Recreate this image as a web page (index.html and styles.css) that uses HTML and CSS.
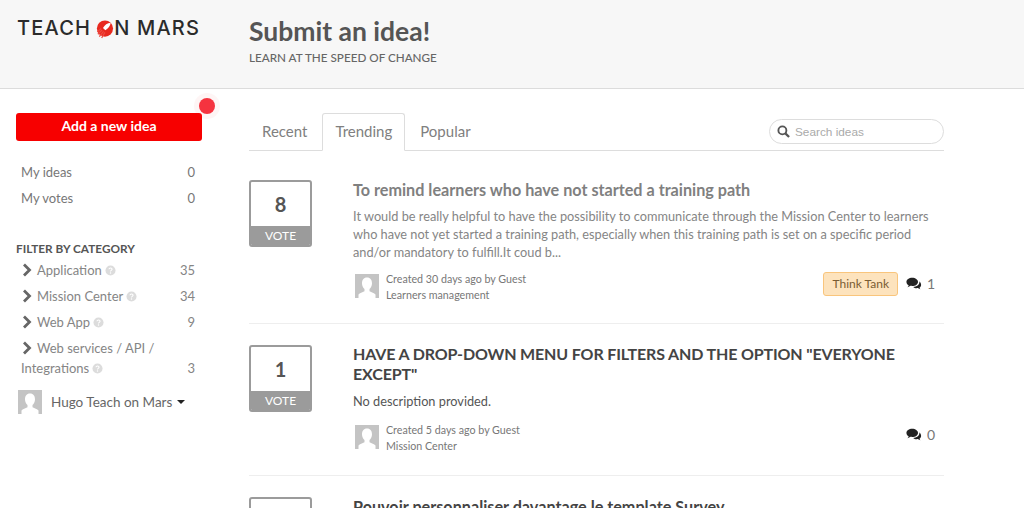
FILE: index.html
```html
<!DOCTYPE html>
<html lang="en">
<head>
    <meta charset="UTF-8">
    <title>Submit an idea!</title>
    <link rel="stylesheet" href="styles.css">
</head>
<body>
    <svg class="defs" width="0" height="0">
        <symbol id="avatar" viewBox="0 0 24 24">
            <rect width="24" height="24" fill="#c4c4c4"/>
            <path d="M12 3.500c-3.400 0-5 2.600-5 5.800 0 2.400 1 4.500 2.500 5.700v2.200c-2 1-4.800 1.700-6 3.300v3.500h17v-3.500c-1.200-1.600-4-2.300-6-3.300V15c1.500-1.200 2.500-3.300 2.500-5.700 0-3.200-1.600-5.800-5-5.800z" fill="#fff"/>
        </symbol>
        <symbol id="chevron" viewBox="0 0 10 14">
            <path d="M2 1.500 7.500 7 2 12.500" fill="none" stroke="#666" stroke-width="2.800"/>
        </symbol>
        <symbol id="comments" viewBox="0 0 18 14">
            <path d="M7 .5C3.400.5.500 2.600.500 5.200c0 1.500 1 2.900 2.500 3.800-.2.800-.7 1.500-1.300 2.100 1.300-.2 2.500-.7 3.400-1.500.6.100 1.200.2 1.900.2 3.600 0 6.500-2.100 6.500-4.600S10.600.5 7 .5z" fill="#222"/>
            <path d="M15 4.600c.1.300.1.500.1.800 0 3-3.100 5.400-7 5.600.9.900 2.300 1.400 3.800 1.400.5 0 1-.1 1.500-.2.800.7 1.700 1.100 2.800 1.300-.5-.5-.9-1.100-1-1.800 1.100-.7 1.800-1.800 1.800-3 0-1.700-1-3.100-2-4.100z" fill="#222"/>
        </symbol>
        <symbol id="help" viewBox="0 0 12 12">
            <circle cx="6" cy="6" r="5.500" fill="#dcdcdc"/>
            <path d="M4.300 4.700C4.400 3.700 5.100 3.200 6 3.200c1 0 1.700.6 1.700 1.400 0 1.300-1.700 1.300-1.700 2.500" fill="none" stroke="#fff" stroke-width="1.200"/>
            <circle cx="6" cy="8.800" r=".8" fill="#fff"/>
        </symbol>
    </svg>

    <!-- Header -->
    <header class="top">
        <div class="logo">
            <span>TEACH</span>
            <svg class="logo-o" viewBox="0 0 20 20" width="19" height="19">
                <circle cx="10.500" cy="9" r="8.500" fill="#e8291f"/>
                <path d="M16.500 3c-3.500.3-6.300 2.400-8.100 5.400l2.500 2.500c3-1.800 5.300-4.400 5.600-7.900z" fill="#fff"/>
                <path d="M7.500 10.500 3 15M9 12 4.500 17.500M6.500 9 2.500 12.500M10.500 13 7 19" stroke="#ee4a40" stroke-width="1.300" fill="none"/>
            </svg>
            <span>N MARS</span>
        </div>
        <div class="top-titles">
            <h1>Submit an idea!</h1>
            <p>LEARN AT THE SPEED OF CHANGE</p>
        </div>
    </header>

    <div class="page">
        <!-- Colonne de gauche -->
        <aside class="side">
            <a class="add-btn">Add a new idea<span class="dot"></span></a>

            <ul class="side-list mine">
                <li><span>My ideas</span><span>0</span></li>
                <li><span>My votes</span><span>0</span></li>
            </ul>

            <h4>FILTER BY CATEGORY</h4>
            <ul class="side-list cats">
                <li><span><svg class="chev"><use href="#chevron"/></svg>Application<svg class="help"><use href="#help"/></svg></span><span>35</span></li>
                <li><span><svg class="chev"><use href="#chevron"/></svg>Mission Center<svg class="help"><use href="#help"/></svg></span><span>34</span></li>
                <li><span><svg class="chev"><use href="#chevron"/></svg>Web App<svg class="help"><use href="#help"/></svg></span><span>9</span></li>
                <li class="two-lines"><span><svg class="chev"><use href="#chevron"/></svg>Web services / API / Integrations<svg class="help"><use href="#help"/></svg></span><span>3</span></li>
            </ul>

            <div class="user">
                <svg class="user-pic"><use href="#avatar"/></svg>
                <span>Hugo Teach on Mars</span>
                <i class="caret"></i>
            </div>
        </aside>

        <!-- Liste des idees -->
        <main class="content">
            <div class="tabs">
                <a class="tab recent">Recent</a>
                <a class="tab active">Trending</a>
                <a class="tab">Popular</a>
                <div class="search">
                    <svg viewBox="0 0 14 14" width="13" height="13"><circle cx="5.800" cy="5.800" r="4.300" fill="none" stroke="#555" stroke-width="2"/><path d="M9 9l4 4" stroke="#555" stroke-width="2.400"/></svg>
                    <span>Search ideas</span>
                </div>
            </div>

            <article class="idea first">
                <div class="vote"><b>8</b><span>VOTE</span></div>
                <div class="idea-body">
                    <h2 class="muted">To remind learners who have not started a training path</h2>
                    <p class="desc">It would be really helpful to have the possibility to communicate through the Mission Center to learners who have not yet started a training path, especially when this training path is set on a specific period and/or mandatory to fulfill.It coud b...</p>
                    <div class="meta">
                        <svg class="meta-pic"><use href="#avatar"/></svg>
                        <div class="meta-text">Created 30 days ago by Guest<br>Learners management</div>
                        <span class="tag">Think Tank</span>
                        <svg class="bubbles"><use href="#comments"/></svg>
                        <span class="count">1</span>
                    </div>
                </div>
            </article>

            <article class="idea second">
                <div class="vote"><b>1</b><span>VOTE</span></div>
                <div class="idea-body">
                    <h2 class="upper">HAVE A DROP-DOWN MENU FOR FILTERS AND THE OPTION "EVERYONE EXCEPT"</h2>
                    <p class="desc dark">No description provided.</p>
                    <div class="meta">
                        <svg class="meta-pic"><use href="#avatar"/></svg>
                        <div class="meta-text">Created 5 days ago by Guest<br>Mission Center</div>
                        <svg class="bubbles"><use href="#comments"/></svg>
                        <span class="count">0</span>
                    </div>
                </div>
            </article>

            <article class="idea">
                <div class="vote"><b></b><span>VOTE</span></div>
                <div class="idea-body">
                    <h2>Pouvoir personnaliser davantage le template Survey</h2>
                </div>
            </article>
        </main>
    </div>
</body>
</html>
```

FILE: styles.css
```css
html, body {
    margin: 0;
    padding: 0;
    height: 100%;
    overflow: hidden;
}
body {
    font-family: Lato, "Open Sans", sans-serif;
    font-size: 14px;
    color: #777;
    background-color: #fff;
}
.defs {
    display: block;
    height: 0;
}
ul {
    list-style: none;
    margin: 0;
    padding: 0;
}

/* Header */
.top {
    display: flex;
    height: 88px;
    background-color: #f7f7f7;
    border-bottom: 1px solid #dcdcdc;
}
.logo {
    display: flex;
    align-items: center;
    align-self: flex-start;
    width: 232px;
    height: 20px;
    margin: 18px 0 0 17px;
    font-family: Inter, Lato, sans-serif;
    font-size: 20px;
    font-weight: 500;
    letter-spacing: 1.2px;
    color: #2b2b2b;
}
.logo-o {
    margin: 3px 0 0 4px;
}
.top-titles h1 {
    margin: 16px 0 0;
    font-size: 26.5px;
    line-height: 30px;
    font-weight: 700;
    color: #555;
}
.top-titles p {
    margin: 3px 0 0;
    font-size: 11.7px;
    line-height: 16px;
    font-weight: 500;
    color: #666;
}

/* Layout */
.page {
    display: flex;
    padding-left: 16px;
}
.side {
    width: 186px;
    flex-shrink: 0;
    padding-top: 24px;
}
.content {
    width: 695px;
    margin-left: 47px;
    padding-top: 24px;
}

/* Sidebar */
.add-btn {
    position: relative;
    display: block;
    height: 28px;
    line-height: 26px;
    text-align: center;
    font-size: 14px;
    font-weight: 700;
    color: #fff;
    background-color: #f70000;
    border-radius: 3px;
}
.dot {
    position: absolute;
    top: -15px;
    right: -13px;
    width: 16px;
    height: 16px;
    border-radius: 50%;
    background-color: #f5333f;
    box-shadow: 0 0 0 5px rgba(245, 51, 63, 0.05);
}
.side-list li {
    display: flex;
    justify-content: space-between;
    align-items: flex-end;
    padding: 0 7px 0 5px;
    font-size: 13px;
    line-height: 20px;
}
.mine {
    margin-top: 21px;
}
.mine li {
    margin-bottom: 6px;
}
.side h4 {
    margin: 33px 0 0;
    font-size: 11.8px;
    line-height: 16px;
    font-weight: 700;
    color: #555;
}
.cats {
    margin-top: 3px;
}
.cats li {
    margin-bottom: 6px;
    color: #858585;
}
.cats .two-lines span:first-child {
    width: 145px;
}
.chev {
    width: 10px;
    height: 14px;
    margin: 0 5px 0 1px;
    vertical-align: -2px;
}
.help {
    width: 11px;
    height: 11px;
    margin-left: 3px;
    vertical-align: -1px;
}
.user {
    display: flex;
    align-items: center;
    margin: 12px 0 0 2px;
    font-size: 13.5px;
    color: #666;
}
.user-pic {
    width: 24px;
    height: 24px;
    margin-right: 9px;
}
.caret {
    width: 0;
    height: 0;
    margin-left: 5px;
    border-top: 4px solid #222;
    border-left: 4px solid transparent;
    border-right: 4px solid transparent;
}

/* Tabs */
.tabs {
    display: flex;
    align-items: flex-end;
    height: 37px;
    border-bottom: 1px solid #ddd;
}
.tab {
    height: 36px;
    line-height: 34px;
    padding: 0 13px;
    font-size: 15px;
    color: #808080;
}
.recent {
    padding-right: 15px;
}
.active {
    margin: 0 2px -1px 0;
    padding: 0 12px;
    background-color: #fff;
    border: 1px solid #ddd;
    border-bottom: 1px solid #fff;
    border-radius: 3px 3px 0 0;
}
.search {
    display: flex;
    align-items: center;
    gap: 5px;
    box-sizing: border-box;
    width: 175px;
    height: 25px;
    margin: 0 0 6px auto;
    padding-left: 7px;
    border: 1px solid #ddd;
    border-radius: 13px;
    font-family: "Liberation Sans", Arial, sans-serif;
    font-size: 11.8px;
    color: #aaa;
}

/* Ideas */
.idea {
    display: flex;
    padding-top: 21px;
    padding-bottom: 20px;
    border-bottom: 1px solid #eee;
}
.first {
    padding-top: 29px;
}
.second {
    padding-bottom: 21px;
}
.vote {
    display: flex;
    flex-direction: column;
    flex-shrink: 0;
    box-sizing: border-box;
    width: 63px;
    height: 67px;
    border: 2px solid #9b9b9b;
    border-radius: 3px;
    overflow: hidden;
}
.vote b {
    flex: 1;
    text-align: center;
    font-size: 20px;
    line-height: 44px;
    color: #555;
}
.vote span {
    height: 20px;
    line-height: 20px;
    text-align: center;
    font-size: 12px;
    color: #fff;
    background-color: #9b9b9b;
}
.idea-body {
    flex: 1;
    margin-left: 41px;
}
.idea h2 {
    margin: 0;
    font-size: 16.2px;
    line-height: 20px;
    font-weight: 700;
    color: #444;
}
.idea h2.muted {
    color: #808080;
}
.idea h2.upper {
    margin-top: -1px;
    font-size: 16px;
    letter-spacing: -0.14px;
}
.desc {
    margin: 7px 0 0;
    font-size: 12.75px;
    line-height: 18px;
    color: #858585;
}
.dark {
    margin-top: 8px;
    margin-bottom: 12px;
    color: #555;
}
.meta {
    display: flex;
    align-items: center;
    margin-top: 10px;
}
.meta-pic {
    width: 24px;
    height: 24px;
    margin: 0 7px 2px 2px;
}
.meta-text {
    flex: 1;
    font-size: 10.7px;
    line-height: 16px;
    color: #777;
}
.tag {
    height: 22px;
    line-height: 22px;
    padding: 0 8px;
    margin: 0 8px 7px 0;
    font-size: 12px;
    color: #7a5c33;
    background-color: #fde3bd;
    border: 1px solid #f9c57c;
    border-radius: 3px;
}
.bubbles {
    width: 16px;
    height: 13px;
    margin: 0 5px 7px 0;
}
.count {
    width: 9px;
    margin: 0 8px 7px 0;
    font-size: 14px;
    line-height: 16px;
    color: #777;
}
```
